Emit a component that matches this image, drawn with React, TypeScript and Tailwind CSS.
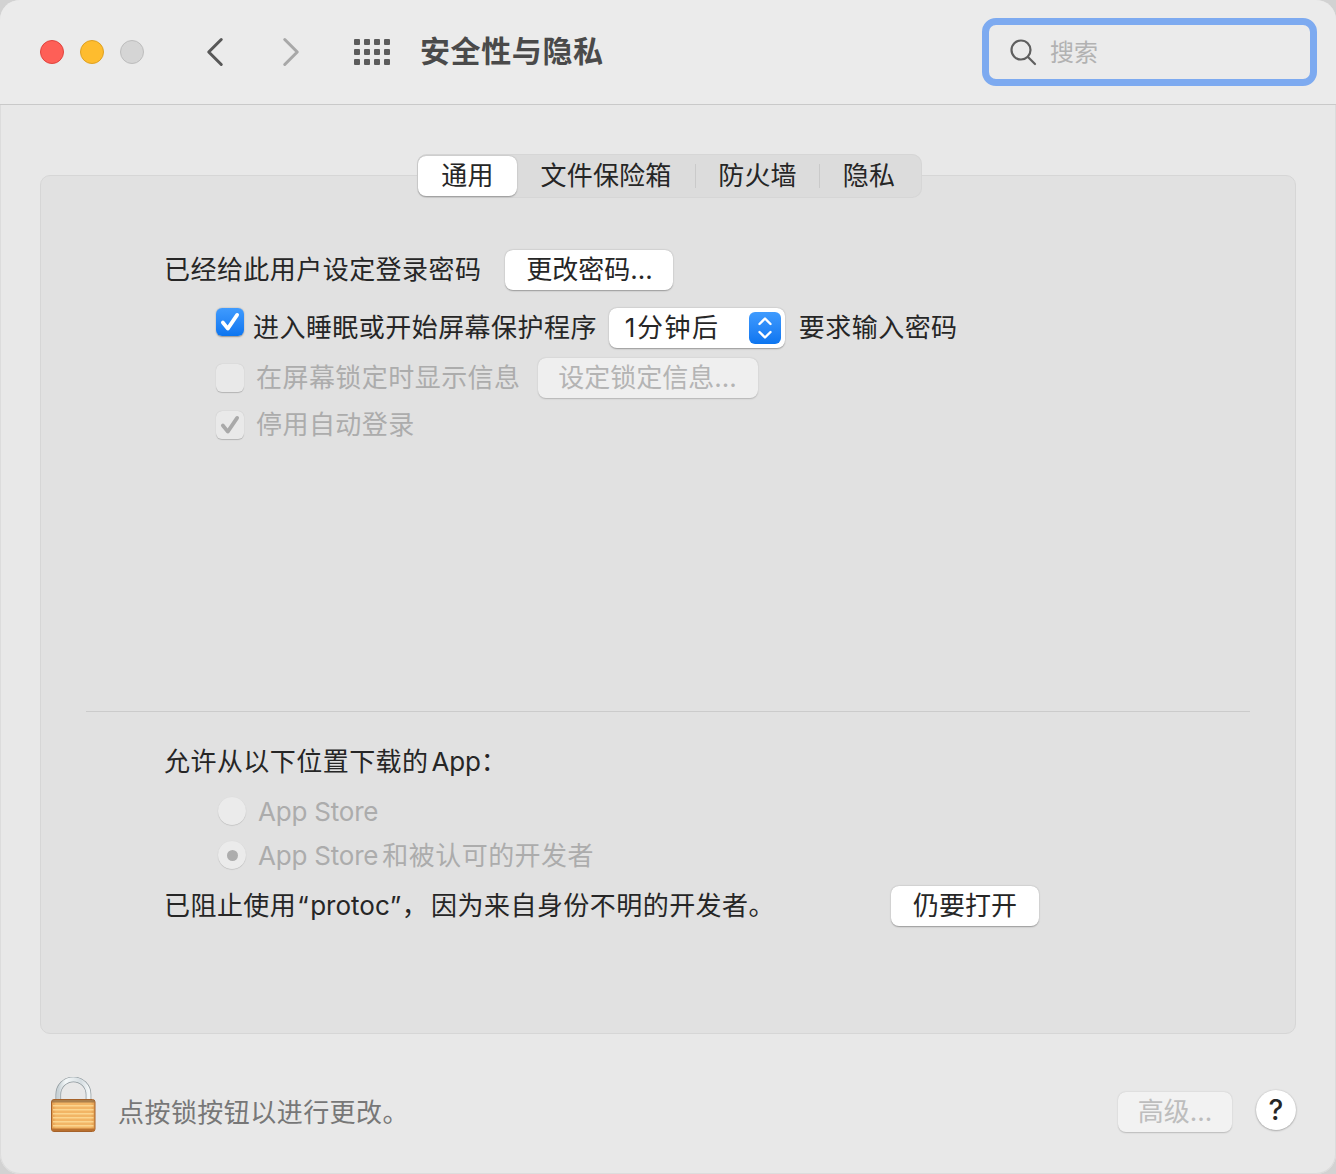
import { ChevronLeft, ChevronRight } from 'lucide-react'

const btn =
  'h-10 flex items-center justify-center rounded-[8px] bg-white shadow-[0_0.5px_1.5px_rgba(0,0,0,0.32)] text-[#262626] tracking-normal pb-[2px]'
const btnOff =
  'h-10 flex items-center justify-center rounded-[8px] bg-[#efefef] shadow-[0_0.5px_1.5px_rgba(0,0,0,0.2)] text-[#b4b4b4] tracking-normal pb-[2px]'

function Check({ color }: { color: string }) {
  return (
    <svg width="22" height="22" viewBox="0 0 20 20" fill="none">
      <path d="M3.5 10.5 8 16 16.5 3.5" stroke={color} strokeWidth="3.4" strokeLinecap="round" strokeLinejoin="round" />
    </svg>
  )
}

function Lock() {
  const stripes = [6, 10, 14, 18, 22, 26]
  return (
    <svg width="48" height="56" viewBox="0 0 48 56" className="block">
      <defs>
        <linearGradient id="shackle" x1="0" y1="0" x2="1" y2="0">
          <stop offset="0" stopColor="#c9d2d6" />
          <stop offset="0.25" stopColor="#f4f8f9" />
          <stop offset="0.75" stopColor="#d5dde1" />
          <stop offset="1" stopColor="#f2f6f7" />
        </linearGradient>
        <linearGradient id="lockBody" x1="0" y1="0" x2="1" y2="0">
          <stop offset="0" stopColor="#e09a4c" />
          <stop offset="0.1" stopColor="#f2b565" />
          <stop offset="0.9" stopColor="#f2b565" />
          <stop offset="1" stopColor="#e09a4c" />
        </linearGradient>
      </defs>
      <path d="M8.3 24V17.5a15.1 15.1 0 0 1 30.2 0V24" fill="none" stroke="#8b959a" strokeWidth="5.6" />
      <path d="M8.3 24V17.5a15.1 15.1 0 0 1 30.2 0V24" fill="none" stroke="url(#shackle)" strokeWidth="4.2" />
      <g transform="translate(1 22)">
        <rect x="0.5" y="0.5" width="43.5" height="32" rx="2.5" fill="url(#lockBody)" stroke="#a5622a" />
        <rect x="1" y="1" width="42.5" height="2.5" fill="#8d6a42" opacity="0.7" />
        {stripes.map((y) => (
          <rect key={y} x="2" y={y} width="40.5" height="1.5" fill="#fcd894" opacity="0.9" />
        ))}
        <rect x="1" y="29.5" width="42.5" height="2.5" fill="#b9702f" />
      </g>
    </svg>
  )
}

export default function App() {
  return (
    <div
      className="w-[1336px] h-[1174px] bg-[#d2d2d2] text-[26px] tracking-[0.45px] text-[#262626] overflow-hidden"
      style={{ fontFamily: 'Inter, "Noto Sans CJK SC", sans-serif' }}
    >
      <div className="h-full flex flex-col rounded-[20px] overflow-hidden bg-[#e8e8e8] shadow-[inset_0_0_0_1px_#dcdcdc]">
        <div className="h-[105px] shrink-0 flex items-center bg-[#ebebeb] border-b border-[#c9c9c9] pl-10">
          <span className="w-6 h-6 rounded-full bg-[#fe5f57] border border-[#e0443e]" />
          <span className="w-6 h-6 rounded-full bg-[#febc2e] border border-[#dea123] ml-4" />
          <span className="w-6 h-6 rounded-full bg-[#d5d5d5] border border-[#bdbdbd] ml-4" />
          <ChevronLeft size={50} strokeWidth={1.45} className="ml-[46px] text-[#585858]" />
          <ChevronRight size={50} strokeWidth={1.45} className="ml-[26px] text-[#a8a8a8]" />
          <div className="ml-[38px] w-9 grid grid-cols-4 gap-x-[4px] gap-y-[4px]">
            {Array.from({ length: 12 }).map((_, i) => (
              <span key={i} className="w-[6px] h-[6px] rounded-[1px] bg-[#5c5c5c]" />
            ))}
          </div>
          <div className="ml-[30px] pb-[2px] text-[30px] font-bold tracking-[0.6px] text-[#4a4a4a] leading-none">安全性与隐私</div>
          <div className="ml-auto mr-[19px] w-[335px] h-[68px] rounded-[14px] border-[7px] border-[#7daaf0] flex items-center pl-5">
            <svg width="28" height="28" viewBox="0 0 28 28" fill="none" stroke="#5f5f5f" strokeWidth="2.2">
              <circle cx="12" cy="12" r="9.5" />
              <path d="M19 19l7 7" strokeLinecap="round" />
            </svg>
            <span className="ml-[13px] pt-[2px] text-[24px] text-[#b2b2b2] tracking-normal">搜索</span>
          </div>
        </div>

        <div className="flex-1 flex flex-col px-10 pt-[70px]">
          <div className="h-[859px] shrink-0 flex flex-col bg-[#e1e1e1] border border-[#d6d6d6] rounded-[10px]">
            <div className="flex justify-center -mt-[22px] ml-[3px]">
              <div className="h-[44px] w-[505px] flex items-center rounded-[10px] bg-[#dcdcdc] shadow-[inset_0_0_0_1px_#d6d6d6] px-[1px] tracking-[0.2px]">
                <div className="w-[99px] h-10 pb-[2px] flex items-center justify-center rounded-[8px] bg-white shadow-[0_0.5px_1.5px_rgba(0,0,0,0.32)]">通用</div>
                <div className="w-[178px] pb-[2px] flex justify-center">文件保险箱</div>
                <div className="w-px h-6 bg-[#cacaca]" />
                <div className="w-[123px] pb-[2px] flex justify-center">防火墙</div>
                <div className="w-px h-6 bg-[#cacaca]" />
                <div className="w-[98px] pb-[2px] flex justify-center">隐私</div>
              </div>
            </div>

            <div className="mt-[52px] h-10 flex items-center pl-[123px]">
              <span className="pb-[2px]">已经给此用户设定登录密码</span>
              <div className={`${btn} w-[168px] ml-6`}>更改密码...</div>
            </div>

            <div className="mt-[18px] h-10 flex items-start pl-[175px]">
              <div className="w-7 h-7 rounded-[6px] flex items-center justify-center bg-gradient-to-b from-[#3f9bfe] to-[#0a75f0] shadow-[0_0.5px_1.5px_rgba(0,0,0,0.35)]">
                <Check color="#ffffff" />
              </div>
              <span className="ml-[9px] h-10 leading-[39px]">进入睡眠或开始屏幕保护程序</span>
              <div className={`${btn} w-[176px] ml-[12px] !justify-between pl-4 pr-1`}>
                <span className="tracking-[1.5px]">1分钟后</span>
                <div className="w-8 h-8 mt-[2px] rounded-[6px] flex items-center justify-center bg-gradient-to-b from-[#3f9bfe] to-[#0a75f0]">
                  <svg width="18" height="26" viewBox="0 0 18 26" fill="none" stroke="#fff" strokeWidth="2.4" strokeLinecap="round" strokeLinejoin="round">
                    <path d="M3.5 9 9 3.5 14.5 9" />
                    <path d="M3.5 17 9 22.5 14.5 17" />
                  </svg>
                </div>
              </div>
              <span className="ml-[14px] h-10 leading-[39px]">要求输入密码</span>
            </div>

            <div className="mt-[10px] h-10 flex items-center pl-[175px] text-[#acacac]">
              <div className="w-7 h-7 rounded-[6px] bg-[#e9e9e9] shadow-[0_0.5px_1px_rgba(0,0,0,0.2)]" />
              <span className="ml-3 pb-[2px]">在屏幕锁定时显示信息</span>
              <div className={`${btnOff} w-[220px] ml-[17px]`}>设定锁定信息...</div>
            </div>

            <div className="mt-[7px] h-10 flex items-center pl-[175px] text-[#acacac]">
              <div className="w-7 h-7 rounded-[6px] bg-[#e9e9e9] shadow-[0_0.5px_1px_rgba(0,0,0,0.2)] flex items-center justify-center">
                <Check color="#a9a9a9" />
              </div>
              <span className="ml-3 pb-[2px]">停用自动登录</span>
            </div>

            <div className="mt-[266px] mx-[45px] h-px bg-[#cbcbcb]" />

            <div className="mt-[29px] h-10 flex items-center pl-[123px]">
              <span>允许从以下位置下载的<span className="ml-[3px] tracking-[-0.2px]">App</span>：</span>
            </div>

            <div className="mt-[10px] h-10 flex items-center pl-[177px] text-[#acacac]">
              <div className="w-7 h-7 rounded-full bg-[#ebebeb] shadow-[0_0.5px_1px_rgba(0,0,0,0.2)]" />
              <span className="ml-[12px] tracking-[-0.2px]">App Store</span>
            </div>
            <div className="mt-1 h-10 flex items-center pl-[177px] text-[#acacac]">
              <div className="w-7 h-7 rounded-full bg-[#ebebeb] shadow-[0_0.5px_1px_rgba(0,0,0,0.2)] flex items-center justify-center">
                <span className="w-[11px] h-[11px] rounded-full bg-[#adadad]" />
              </div>
              <span className="ml-[12px]">
                <span className="tracking-[-0.2px]">App Store</span>
                <span className="ml-[4px]">和被认可的开发者</span>
              </span>
            </div>

            <div className="mt-[11px] h-10 flex items-center pl-[123px]">
              <span className="pb-[2px]">
                已阻止使用<span className="ml-[1px]">“</span>
                <span className="ml-[1px] tracking-normal">protoc</span>”<span className="mr-[3px]">，</span>因为来自身份不明的开发者。
              </span>
              <div className={`${btn} w-[148px] ml-auto mr-[256px]`}>仍要打开</div>
            </div>
          </div>

          <div className="flex items-start mt-[43px]">
            <div className="ml-[10px] shrink-0">
              <Lock />
            </div>
            <span className="ml-[20px] mt-[16px] h-10 leading-10 text-[#777777]">点按锁按钮以进行更改。</span>
            <div className={`${btnOff} w-[114px] ml-auto mt-[15px] !bg-[#f2f2f2] !text-[#bdbdbd]`}>高级...</div>
            <div className="ml-6 mt-[13px] w-10 h-10 rounded-full bg-white shadow-[0_0.5px_2px_rgba(0,0,0,0.4)] flex items-center justify-center text-[28px] font-medium">?</div>
          </div>
        </div>
      </div>
    </div>
  )
}
